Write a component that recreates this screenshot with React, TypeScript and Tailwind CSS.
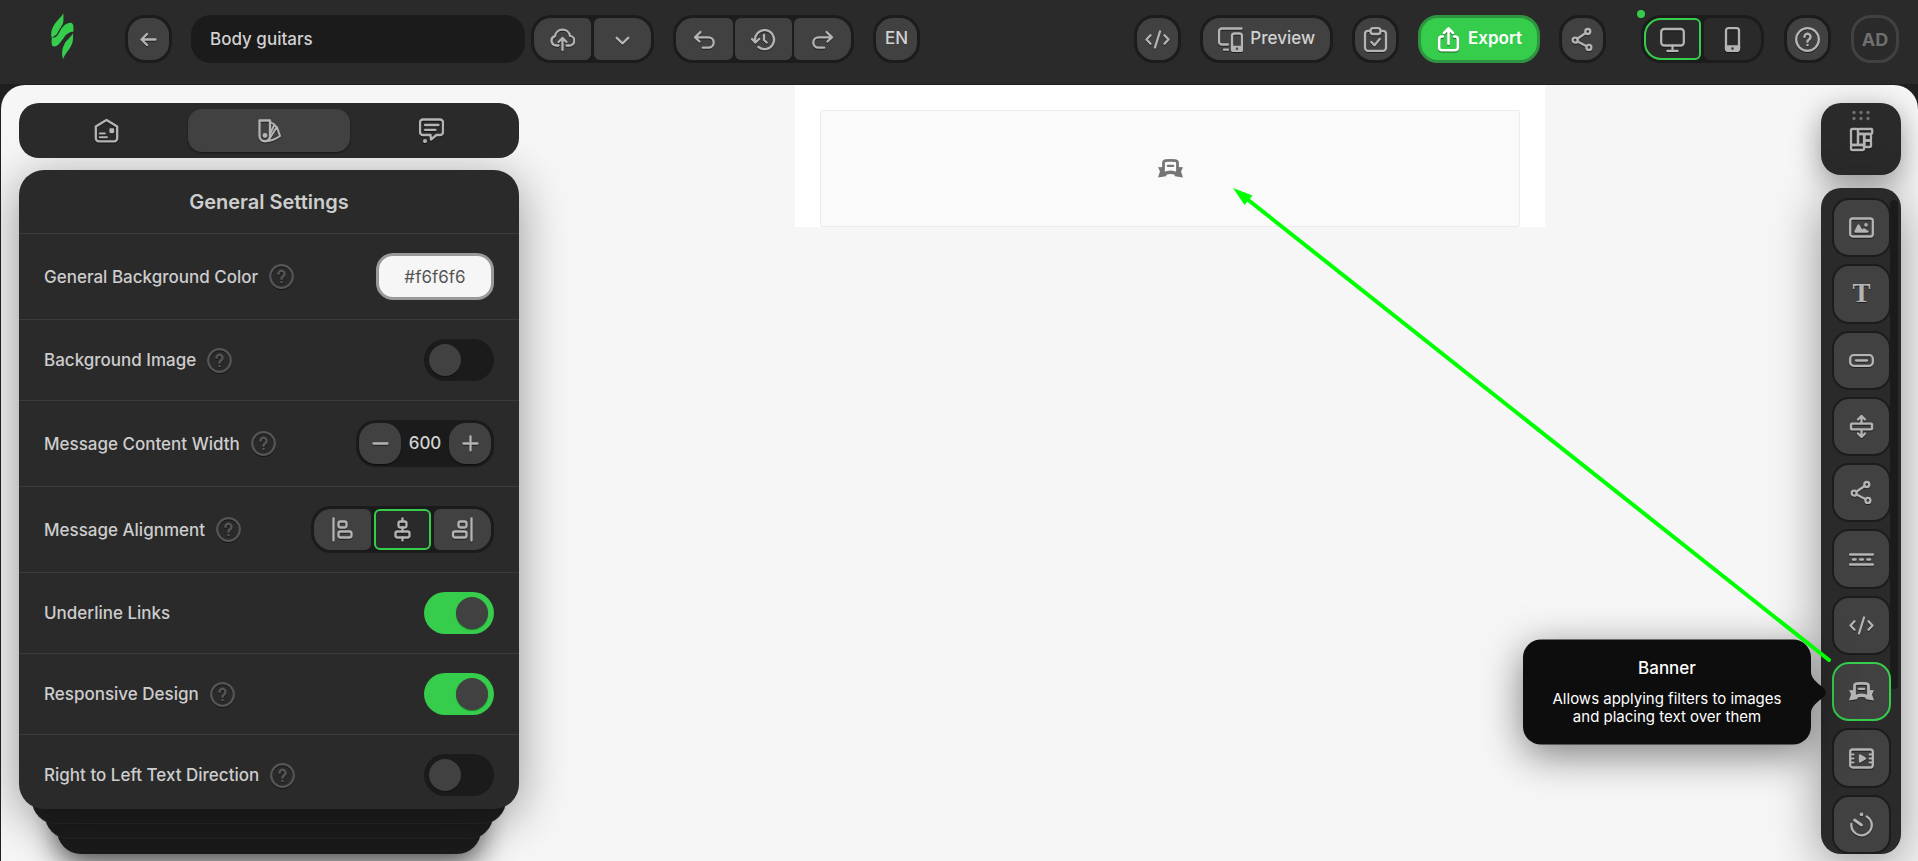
import { useState } from 'react';
import type { ReactNode } from 'react';

interface IconProps {
  children: ReactNode;
  className?: string;
}

function Icon({ children, className = '' }: IconProps) {
  return (
    <svg
      className={`w-[25px] h-[25px] shrink-0 drop-shadow-[0_1px_0_rgba(0,0,0,0.5)] ${className}`}
      viewBox="0 0 25 25"
      fill="none"
      stroke="currentColor"
      strokeWidth={2.3}
      strokeLinecap="round"
      strokeLinejoin="round"
      aria-hidden="true"
    >
      {children}
    </svg>
  );
}

const BackIcon = () => (
  <Icon>
    <path d="M19.5 12.5H6M11 7l-5.5 5.5L11 18" />
  </Icon>
);

const CloudIcon = () => (
  <Icon>
    <path d="M8.5 18.5H6a4.8 4.8 0 0 1-1-9.4 7.6 7.6 0 0 1 15-.2 4.8 4.8 0 0 1-1 9.600h-2.500" />
    <path d="M12.5 23V11.5M8.5 15l4-4 4 4" />
  </Icon>
);

const ChevronIcon = () => (
  <Icon>
    <path d="M6.7 10.8l5.8 5.5 5.8-5.5" />
  </Icon>
);

const UndoIcon = () => (
  <Icon>
    <path d="M8.5 5L3 10.3 7.5 14.5M3.5 10.3h13a5.2 5.2 0 0 1 0 10.4H10.8" />
  </Icon>
);

const RedoIcon = () => (
  <Icon>
    <path d="M16.5 5L22 10.3 17.5 14.5M21.5 10.3h-13a5.2 5.2 0 0 0 0 10.4h5.7" />
  </Icon>
);

const HistoryIcon = () => (
  <Icon>
    <path d="M4.2 14.5A9.5 9.5 0 1 1 7.5 20M1 12l3.200 3.600L8.200 12M13 8v5l2.700 2.500" />
  </Icon>
);

const CodeIcon = () => (
  <Icon>
    <path d="M5.5 8.3l-4 4.2 4 4.2M19.5 8.3l4 4.2-4 4.2M15 4.5l-5 16" />
  </Icon>
);

const PreviewIcon = () => (
  <Icon>
    <path d="M23.5 1.5H4a3 3 0 0 0-3 3v10a3 3 0 0 0 3 3h6M6 22.7h4" />
    <rect x="14" y="6.5" width="10" height="17.5" rx="2.5" />
    <path d="M14 20h10v2.5a1.5 1.5 0 0 1-1.5 1.5h-7a1.5 1.5 0 0 1-1.5-1.5z" fill="currentColor" />
    <circle cx="19" cy="21.700" r="0.500" stroke="#414141" strokeWidth={1.5} />
  </Icon>
);

const ClipboardIcon = () => (
  <Icon>
    <path d="M7.5 3.8H5a3 3 0 0 0-3 3v14a3 3 0 0 0 3 3h15a3 3 0 0 0 3-3v-14a3 3 0 0 0-3-3h-2.5" />
    <rect x="7.5" y="1.2" width="10" height="5.8" rx="2.6" />
    <path d="M8.3 15l3.2 3.2 5.2-6.2" />
  </Icon>
);

const ExportIcon = () => (
  <Icon>
    <path
      d="M7 9.5H6a2.800 2.800 0 0 0-2.800 2.800v8.200A2.800 2.800 0 0 0 6 23.300h13a2.800 2.800 0 0 0 2.800-2.800v-8.200A2.800 2.800 0 0 0 19 9.500h-1M12.500 17V2M8 6l4.500-4.500L17 6"
      strokeWidth={2.6}
    />
  </Icon>
);

const ShareIcon = () => (
  <Icon>
    <circle cx="17.8" cy="4.5" r="2.5" />
    <circle cx="5.2" cy="13.2" r="2.5" />
    <circle cx="18.9" cy="20.4" r="2.5" />
    <path d="M7.3 11.8l8.4-5.8M7.5 14.400l9.200 4.800" />
  </Icon>
);

const DesktopIcon = () => (
  <Icon>
    <rect x="1.2" y="2" width="22.6" height="16.5" rx="3" />
    <path d="M12.5 19v4M7.5 24h10" />
  </Icon>
);

const PhoneIcon = () => (
  <Icon>
    <rect x="6" y="1.2" width="13" height="22.6" rx="2.5" />
    <path d="M6 19.500h13v2a2.500 2.500 0 0 1-2.500 2.300h-8A2.500 2.500 0 0 1 6 21.500z" fill="currentColor" />
    <circle cx="12.5" cy="21.5" r="0.5" stroke="#2a2a2a" strokeWidth={1.500} />
  </Icon>
);

const HelpIcon = () => (
  <Icon>
    <circle cx="12.5" cy="12.5" r="11.3" />
    <path d="M9.500 9.800a3 3 0 1 1 4.600 2.600c-1 .7-1.600 1.200-1.600 2.300M12.500 18v.1" strokeWidth={2.500} />
  </Icon>
);

const HomeIcon = () => (
  <Icon>
    <path d="M1.800 8.500L12.500 2l10.700 6.500v11.800a3 3 0 0 1-3 3H4.800a3 3 0 0 1-3-3z" />
    <path d="M5.800 15.500h5M5.800 19.200h7.200" strokeWidth={2} />
    <path d="M16.500 11.500h2.500v2.500h-2.500z" fill="currentColor" />
  </Icon>
);

const SwatchIcon = () => (
  <Icon>
    <path d="M2.500 2.500h10.500v15.500a5.200 5.200 0 0 1-10.500 0z" />
    <path d="M13 4l4.500 2.500-4.300 9M17.800 7.500l2.200 1.800 3 8.700c-4 3-9 5-14 5.200M19.500 9.500l-7.500 12" strokeWidth={2} />
    <circle cx="8" cy="17.500" r="1.300" fill="currentColor" />
  </Icon>
);

const CommentIcon = () => (
  <Icon>
    <path d="M4 1.500h17a3 3 0 0 1 3 3v9.500a3 3 0 0 1-3 3h-3.500l-5.500 4.500-.5-4.500H4a3 3 0 0 1-3-3V4.500a3 3 0 0 1 3-3z" />
    <path d="M6 7h13.500M6 11.800h10.500" />
    <circle cx="6" cy="23" r="0.900" fill="currentColor" />
  </Icon>
);

const AlignLeftIcon = () => (
  <Icon>
    <path d="M3.500 1.500v22" />
    <rect x="8.500" y="4.500" width="8" height="6" rx="2" />
    <rect x="8.500" y="14.500" width="13" height="6" rx="2" />
  </Icon>
);

const AlignCenterIcon = () => (
  <Icon>
    <path d="M12.500 1.500v3M12.500 10.500v4M12.500 20.500v3" />
    <rect x="8.500" y="4.500" width="8" height="6" rx="2" />
    <rect x="5.500" y="14.500" width="14" height="6" rx="2" />
  </Icon>
);

const AlignRightIcon = () => (
  <Icon>
    <path d="M21.500 1.500v22" />
    <rect x="8.500" y="4.500" width="8" height="6" rx="2" />
    <rect x="3" y="14.500" width="13.500" height="6" rx="2" />
  </Icon>
);

const LayoutIcon = () => (
  <Icon>
    <rect x="2" y="2" width="7" height="16" rx="1" />
    <rect x="9" y="2" width="14.200" height="5" rx="1" />
    <rect x="9" y="7" width="6" height="11" />
    <rect x="15.500" y="7" width="6.500" height="6.500" rx="1" />
    <rect x="15.500" y="13.500" width="6.500" height="6.500" rx="1" />
    <rect x="2" y="18" width="13" height="5" rx="1" />
  </Icon>
);

const ImageIcon = () => (
  <Icon>
    <rect x="1.200" y="3.500" width="22.600" height="18" rx="2.500" />
    <path d="M6.500 16.500l3-6 3.500 6zM13 16.500l2-2 2 1.500 1.500.5z" fill="currentColor" />
    <circle cx="17" cy="9.800" r="0.700" fill="currentColor" />
  </Icon>
);

const ButtonIcon = () => (
  <Icon>
    <rect x="1.200" y="7.200" width="22.600" height="10.600" rx="3.500" />
    <path d="M7 12.500h11" />
  </Icon>
);

const SpacerIcon = () => (
  <Icon>
    <rect x="2" y="9.600" width="21" height="5.800" rx="1" />
    <path d="M12.500 9V3M9 5.500l3.500-3.500L16 5.500M12.500 16v6M9 19.500l3.500 3.500 3.500-3.500" />
  </Icon>
);

const DividerIcon = () => (
  <Icon>
    <path d="M1.200 7.500h22.600M1.200 17.500h22.600M4 12.500h2.500M11.200 12.500h2.600M18.500 12.500H21" strokeWidth={2.500} />
  </Icon>
);

const BannerIcon = ({ className = '' }: { className?: string }) => (
  <Icon className={className}>
    <path d="M5.500 16V7Q5.500 5 7.500 4.700 12.500 4 17.500 4.700 19.500 5 19.500 7V16" strokeWidth={2.800} />
    <path d="M9.800 9.800h5.400" />
    <path
      d="M0 11.300l5-.3.500 5.200Q12.500 13 19.500 16.200L20 11l5 .3-2 4.200 2 6-8-1.200-.8-1.800q-3.700-1-7.400 0L8 20.300 0 21.500l2-6z"
      fill="currentColor"
      stroke="none"
    />
  </Icon>
);

const VideoIcon = () => (
  <Icon>
    <rect x="1.200" y="3.500" width="22.600" height="18" rx="2.500" />
    <path d="M2.500 8.500h2M2.500 12.500h2M2.500 16.500h2M20.500 8.500h2M20.500 12.500h2M20.500 16.500h2" strokeWidth={2} />
    <path d="M11 9.500l5 3-5 3z" fill="currentColor" />
  </Icon>
);

const TimerIcon = () => (
  <Icon>
    <path d="M17.800 4.400a10.200 10.200 0 1 1-15.400 7.600" />
    <path d="M5.500 8l7 5" strokeWidth={2.800} />
    <circle cx="12.500" cy="2.300" r="0.700" fill="currentColor" />
  </Icon>
);

const TextIcon = () => (
  <span className="font-['Liberation_Serif',serif] text-[27px] leading-none font-bold [text-shadow:0_1px_0_rgba(0,0,0,0.5)]">
    T
  </span>
);

const Logo = () => (
  <svg className="w-6 h-12" viewBox="0 0 24 48" fill="#35cd4b" aria-hidden="true">
    <path d="M13.400 1.200v8.300C12.800 13.500 9 17.500 7 22 4.500 24.200 2.400 25 1.600 26 .4 21 1.500 17 4.500 12.200 7.500 8 11.500 5 13.400 1.200z" />
    <path d="M2 25.500c4 .5 5.500-1.500 8-6.500 3-5.500 6.500-8.300 11-8.300 2.400.3 2.900 4.500 2.300 9.300-1.500-1-4.500.5-7.500 3-4 5-7 11.500-11.800 11.500-2.500 0-2.800-4-2-9z" />
    <path d="M23 21.500c.3 5 .2 9-2.500 13.500-2.500 4.500-5.500 7-7.600 12.300-1.500-6-.9-10.300 1.100-14.300 2.500-5.500 6-7 9-11.500z" />
  </svg>
);

const ICON_BUTTON =
  'w-[47px] h-[48px] flex items-center justify-center rounded-[20px] border-3 border-[#1c1c1c] bg-[#414141] text-[#b4b4b4]';
const GROUP = 'h-[48px] flex p-[3px] rounded-[20px] bg-[#1c1c1c]';
const SEGMENT = 'w-[57px] flex items-center justify-center bg-[#414141] text-[#b4b4b4] rounded-[6px]';

function Header() {
  const [name, setName] = useState('Body guitars');
  const [device, setDevice] = useState('desktop');

  const active = 'bg-[#2a2a2a] border-2 border-[#35cd4b]';

  return (
    <header className="h-[85px] shrink-0 flex items-start pt-[15px] pl-[50px] pr-[19px] bg-[#2a2a2a] border-b border-[#1f1f1f]">
      <a href="#home" aria-label="Home" className="-mt-[3px] mr-[51px]">
        <Logo />
      </a>
      <button type="button" aria-label="Back" className={ICON_BUTTON}>
        <BackIcon />
      </button>
      <input
        aria-label="Template name"
        value={name}
        onChange={(e) => setName(e.target.value)}
        className="ml-[19px] w-[334px] h-[48px] px-[19px] rounded-[20px] bg-[#1b1b1b] text-[#d2d2d2] text-[17px] font-medium outline-none"
      />
      <div className={`${GROUP} gap-[3px] ml-[6px]`}>
        <button type="button" aria-label="Save" className={`${SEGMENT} rounded-l-[17px]`}>
          <CloudIcon />
        </button>
        <button type="button" aria-label="Save options" className={`${SEGMENT} rounded-r-[17px]`}>
          <ChevronIcon />
        </button>
      </div>
      <div className={`${GROUP} gap-[2px] ml-[19px]`}>
        <button type="button" aria-label="Undo" className={`${SEGMENT} rounded-l-[17px]`}>
          <UndoIcon />
        </button>
        <button type="button" aria-label="History" className={SEGMENT}>
          <HistoryIcon />
        </button>
        <button type="button" aria-label="Redo" className={`${SEGMENT} rounded-r-[17px]`}>
          <RedoIcon />
        </button>
      </div>
      <button type="button" className={`${ICON_BUTTON} ml-[19px] text-[17px] font-medium text-[#d2d2d2]`}>
        EN
      </button>

      <div className="ml-auto flex items-start gap-[35px]">
        <div className="flex items-start gap-[19px]">
          <button type="button" aria-label="Code editor" className={ICON_BUTTON}>
            <CodeIcon />
          </button>
          <button
            type="button"
            className="h-[48px] px-[15px] flex items-center gap-[7px] rounded-[20px] border-3 border-[#1c1c1c] bg-[#414141] text-[#b4b4b4]"
          >
            <PreviewIcon />
            <span className="text-[17px] font-medium text-[#d2d2d2]">Preview</span>
          </button>
          <button type="button" aria-label="Checklist" className={ICON_BUTTON}>
            <ClipboardIcon />
          </button>
          <button
            type="button"
            className="h-[48px] px-[15px] flex items-center gap-[7px] rounded-[20px] border-3 border-[#2f9440] bg-[#35cd4b] text-white"
          >
            <ExportIcon />
            <span className="text-[17px] font-semibold">Export</span>
          </button>
          <button type="button" aria-label="Share" className={ICON_BUTTON}>
            <ShareIcon />
          </button>
        </div>
        <div className="flex items-start gap-5">
          <div className={`${GROUP} gap-[3px] relative`}>
            <span className="absolute -left-[4px] -top-[5px] w-2 h-2 rounded-full bg-[#35cd4b]" />
            <button
              type="button"
              aria-label="Desktop view"
              onClick={() => setDevice('desktop')}
              className={`w-[57px] flex items-center justify-center text-[#b4b4b4] rounded-[6px] rounded-l-[17px] ${device === 'desktop' ? active : 'bg-[#2a2a2a]'}`}
            >
              <DesktopIcon />
            </button>
            <button
              type="button"
              aria-label="Mobile view"
              onClick={() => setDevice('mobile')}
              className={`w-[57px] flex items-center justify-center text-[#b4b4b4] rounded-[6px] rounded-r-[17px] ${device === 'mobile' ? active : 'bg-[#2a2a2a]'}`}
            >
              <PhoneIcon />
            </button>
          </div>
          <button type="button" aria-label="Help" className={ICON_BUTTON}>
            <HelpIcon />
          </button>
          <button
            type="button"
            className="w-[48px] h-[48px] rounded-[20px] border-3 border-[#414141] text-[18px] font-bold text-[#6f6f6f]"
          >
            AD
          </button>
        </div>
      </div>
    </header>
  );
}

interface RowProps {
  id: string;
  label: string;
  help?: boolean;
  children: ReactNode;
}

function Row({ id, label, help = true, children }: RowProps) {
  return (
    <div className="flex items-center border-t border-[#3b3b3b] px-[25px] py-[19px]">
      <label htmlFor={id} className="text-[17px] leading-6 font-medium text-[#cdcdcd]">
        {label}
      </label>
      {help && (
        <button type="button" aria-label={`About ${label}`} className="ml-[11px] text-[#555]">
          <HelpIcon />
        </button>
      )}
      <div className="ml-auto">{children}</div>
    </div>
  );
}

function Toggle({ id, defaultChecked = false }: { id: string; defaultChecked?: boolean }) {
  return (
    <input
      id={id}
      type="checkbox"
      role="switch"
      defaultChecked={defaultChecked}
      className="block appearance-none w-[70px] h-[42px] rounded-full bg-[#1b1b1b] p-[5px] before:block before:w-8 before:h-8 before:rounded-full before:bg-[#414141] before:shadow-[0_1px_1px_rgba(0,0,0,0.4)] checked:bg-[#35cd4b] checked:before:ml-[27px]"
    />
  );
}

function GeneralSettings() {
  const [color, setColor] = useState('#f6f6f6');
  const [width, setWidth] = useState(600);
  const [align, setAlign] = useState('center');

  const alignments = [
    { key: 'left', icon: <AlignLeftIcon />, shape: 'rounded-[6px] rounded-l-[17px]' },
    { key: 'center', icon: <AlignCenterIcon />, shape: 'rounded-[6px]' },
    { key: 'right', icon: <AlignRightIcon />, shape: 'rounded-[6px] rounded-r-[17px]' },
  ];

  const stepButton =
    'w-[42px] h-full flex items-center justify-center rounded-[17px] bg-[#414141] text-[#b4b4b4] shadow-[0_1px_1px_rgba(0,0,0,0.5)]';

  return (
    <section className="relative z-0 mt-[12px] flex-1 min-h-0 pb-[45px] flex flex-col">
      {/* Stacked cards under the panel */}
      <div className="absolute -z-10 bottom-0 inset-x-[38px] h-20 rounded-[24px] bg-[#1b1b1b] shadow-[0_10px_30px_rgba(0,0,0,0.7)]" />
      <div className="absolute -z-10 bottom-[15px] inset-x-[26px] h-20 rounded-[24px] bg-[#1d1d1d] border-b border-[#262626]" />
      <div className="absolute -z-10 bottom-[30px] inset-x-[13px] h-20 rounded-[24px] bg-[#1f1f1f] border-b border-[#292929]" />
      <div className="flex-1 min-h-0 overflow-hidden rounded-[25px] bg-[#2a2a2a] shadow-[0_10px_50px_rgba(0,0,0,0.4)]">
        <h2 className="h-[63px] flex items-center justify-center text-[20px] font-semibold text-[#cdcdcd]">
          General Settings
        </h2>
        <Row id="bg-color" label="General Background Color">
          <input
            id="bg-color"
            value={color}
            onChange={(e) => setColor(e.target.value)}
            className="block w-[118px] h-[47px] rounded-[17px] border-3 border-[#999] bg-[#f6f6f6] text-center text-[17px] text-[#555]"
          />
        </Row>
        <Row id="bg-image" label="Background Image">
          <Toggle id="bg-image" />
        </Row>
        <Row id="content-width" label="Message Content Width">
          <div className="w-[138px] h-[47px] p-[3px] flex rounded-[20px] bg-[#1b1b1b]">
            <button type="button" aria-label="Decrease" onClick={() => setWidth(width - 1)} className={stepButton}>
              <Icon>
                <path d="M5.500 12.500h14" />
              </Icon>
            </button>
            <input
              id="content-width"
              value={width}
              onChange={(e) => setWidth(Number(e.target.value) || 0)}
              className="flex-1 min-w-0 text-center text-[17px] font-medium text-[#d2d2d2] outline-none"
            />
            <button type="button" aria-label="Increase" onClick={() => setWidth(width + 1)} className={stepButton}>
              <Icon>
                <path d="M5.500 12.500h14M12.500 5.500v14" />
              </Icon>
            </button>
          </div>
        </Row>
        <Row id="alignment" label="Message Alignment">
          <div
            id="alignment"
            role="group"
            aria-label="Message Alignment"
            className="h-[47px] p-[3px] flex gap-[3px] rounded-[20px] bg-[#1b1b1b]"
          >
            {alignments.map((item) => (
              <button
                key={item.key}
                type="button"
                aria-label={`Align ${item.key}`}
                onClick={() => setAlign(item.key)}
                className={`w-[57px] flex items-center justify-center text-[#b4b4b4] ${item.shape} ${
                  align === item.key ? 'bg-[#2a2a2a] border-2 border-[#35cd4b]' : 'bg-[#414141]'
                }`}
              >
                {item.icon}
              </button>
            ))}
          </div>
        </Row>
        <Row id="underline" label="Underline Links" help={false}>
          <Toggle id="underline" defaultChecked />
        </Row>
        <Row id="responsive" label="Responsive Design">
          <Toggle id="responsive" defaultChecked />
        </Row>
        <Row id="rtl" label="Right to Left Text Direction">
          <Toggle id="rtl" />
        </Row>
      </div>
    </section>
  );
}

function Sidebar() {
  const [tab, setTab] = useState('styles');
  const tabs = [
    { key: 'home', icon: <HomeIcon /> },
    { key: 'styles', icon: <SwatchIcon /> },
    { key: 'comments', icon: <CommentIcon /> },
  ];

  return (
    <aside className="w-[518px] shrink-0 pl-[18px] pt-[18px] pb-[7px] flex flex-col">
      <nav className="relative z-10 h-[55px] shrink-0 flex p-[6px] rounded-[20px] bg-[#2a2a2a]">
        {tabs.map((item) => (
          <button
            key={item.key}
            type="button"
            aria-label={item.key}
            onClick={() => setTab(item.key)}
            className={`flex-1 flex items-center justify-center rounded-[14px] text-[#b4b4b4] ${
              tab === item.key ? 'bg-[#414141] shadow-[0_1px_2px_rgba(0,0,0,0.5)]' : ''
            }`}
          >
            {item.icon}
          </button>
        ))}
      </nav>
      <GeneralSettings />
    </aside>
  );
}

function BannerTooltip() {
  return (
    <div
      role="tooltip"
      className="absolute z-10 right-full top-1/2 -translate-y-1/2 mr-[21px] w-[288px] h-[105px] pt-[18px] rounded-[18px] bg-[#0d0d0d] text-center text-white shadow-[0_10px_40px_rgba(0,0,0,0.5)]"
    >
      <p className="text-[17px] leading-5 font-medium">Banner</p>
      <p className="mt-3 text-[15px] leading-[18px]">
        Allows applying filters to images
        <br />
        and placing text over them
      </p>
      <svg className="absolute left-full top-8 w-4 h-[42px]" viewBox="0 0 16 42" fill="#0d0d0d" aria-hidden="true">
        <path d="M0 0C0 7 5 10 12.500 16.500Q17.500 21 12.500 25.500C5 32 0 35 0 42z" />
      </svg>
    </div>
  );
}

const BLOCKS = [
  { name: 'Image', icon: <ImageIcon /> },
  { name: 'Text', icon: <TextIcon /> },
  { name: 'Button', icon: <ButtonIcon /> },
  { name: 'Spacer', icon: <SpacerIcon /> },
  { name: 'Social', icon: <ShareIcon /> },
  { name: 'Divider', icon: <DividerIcon /> },
  { name: 'HTML', icon: <CodeIcon /> },
  { name: 'Banner', icon: <BannerIcon /> },
  { name: 'Video', icon: <VideoIcon /> },
  { name: 'Timer', icon: <TimerIcon /> },
];

function BlocksBar() {
  return (
    <aside className="w-[97px] shrink-0 pr-[17px] pt-[18px] pb-[7px] flex flex-col gap-[13px]">
      <button
        type="button"
        aria-label="Structures"
        className="w-[80px] h-[72px] shrink-0 pt-[7px] flex flex-col items-center gap-[6px] rounded-[20px] bg-[#2a2a2a] text-[#b4b4b4] shadow-[0_8px_30px_rgba(0,0,0,0.4)]"
      >
        <svg className="w-[18px] h-[11px] shrink-0 text-[#6f6f6f]" viewBox="0 0 18 11" fill="currentColor" aria-hidden="true">
          {[2, 9, 16].map((x) => (
            <g key={x}>
              <circle cx={x} cy="2.500" r="1.700" />
              <circle cx={x} cy="8.500" r="1.700" />
            </g>
          ))}
        </svg>
        <LayoutIcon />
      </button>
      <div className="relative w-[80px] flex-1 min-h-0 pt-[10px] pl-[11px] flex flex-col gap-[7px] rounded-[20px] bg-[#2a2a2a] shadow-[0_10px_50px_rgba(0,0,0,0.4)]">
        <div className="absolute right-[3px] top-[12px] w-[8px] h-[489px] rounded-full bg-[#1b1b1b]" />
        {BLOCKS.map((block) => (
          <div key={block.name} className="relative w-[59px] flex-1 flex">
            <button
              type="button"
              aria-label={block.name}
              className={`flex-1 flex items-center justify-center rounded-[17px] bg-[#414141] text-[#b4b4b4] ${
                block.name === 'Banner' ? 'border-2 border-[#35cd4b]' : 'border-2 border-[#1c1c1c]'
              }`}
            >
              {block.icon}
            </button>
            {block.name === 'Banner' && <BannerTooltip />}
          </div>
        ))}
      </div>
    </aside>
  );
}

function Canvas() {
  return (
    <section className="flex-1 min-w-0 flex justify-center items-start">
      <div className="w-full max-w-[750px] px-[25px] pt-[25px] bg-white">
        <div className="h-[117px] flex items-center justify-center rounded-[2px] border border-[#ececec] bg-[#fafafa]">
          <BannerIcon className="text-[#757575] drop-shadow-none" />
        </div>
      </div>
    </section>
  );
}

export default function App() {
  return (
    <div className="h-screen flex flex-col overflow-hidden bg-[#1f1f1f] font-['Inter',sans-serif]">
      <Header />
      <main className="relative ml-px flex-1 min-h-0 flex overflow-hidden rounded-t-[24px] bg-[#f6f6f6]">
        <Sidebar />
        <Canvas />
        <BlocksBar />
        {/* Arrow from the Banner block to its drop place */}
        <svg
          className="absolute z-20 right-[87px] top-[103px] w-[598px] h-[474px] pointer-events-none"
          viewBox="0 0 598 474"
          aria-hidden="true"
        >
          <path d="M14 11L596 472" stroke="#00ff00" strokeWidth={4} strokeLinecap="round" />
          <path d="M0 0l19.500 7.500-8 9.500z" fill="#00ff00" />
        </svg>
      </main>
    </div>
  );
}
